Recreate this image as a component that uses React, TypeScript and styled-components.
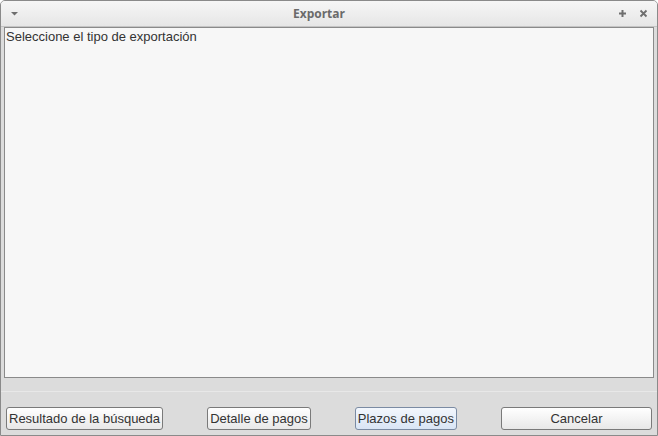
import React from 'react';
import styled, { createGlobalStyle } from 'styled-components';

const GlobalStyle = createGlobalStyle`
  html, body {
    margin: 0;
    padding: 0;
    background: #ffffff;
  }
  * {
    box-sizing: border-box;
  }
`

const Window = styled.div`
  width: 658px;
  height: 436px;
  display: flex;
  flex-direction: column;
  border: 1px solid #8a8a8a;
  border-radius: 5px 5px 0 0;
  background: #dcdcdc;
  overflow: hidden;
`

const TitleBar = styled.div`
  height: 26px;
  flex: none;
  display: flex;
  align-items: center;
  background: linear-gradient(#f6f6f6, #e6e6e6);
  border-bottom: 1px solid #c4c4c4;
`

const TitleSide = styled.div<{ width: number }>`
  width: ${(p) => p.width}px;
  height: 100%;
  display: flex;
  align-items: center;
  justify-content: flex-end;
  gap: 12px;
  padding: 0 9px;
  &:first-child {
    justify-content: flex-start;
  }
`

const Title = styled.div`
  flex: 1;
  text-align: center;
  font-family: "Open Sans", "DejaVu Sans", sans-serif;
  font-weight: bold;
  font-size: 12px;
  color: #6a6a6a;
`

const Body = styled.div`
  flex: 1;
  display: flex;
  flex-direction: column;
  padding: 0 3px;
`

const Panel = styled.div`
  flex: 1;
  background: #f7f7f7;
  border: 1px solid #8a8a8a;
  padding: 0 1px;
  font-family: "Liberation Sans", Arial, sans-serif;
  font-size: 13px;
  line-height: 17px;
  color: #333333;
`

const Footer = styled.div`
  height: 57px;
  flex: none;
  display: flex;
  flex-direction: column;
`

const Separator = styled.div`
  margin-top: 13px;
  height: 1px;
  background: #c2c2c2;
  border-bottom: 1px solid #e8e8e8;
  margin-left: -3px;
  margin-right: -3px;
`

const ButtonRow = styled.div`
  margin-top: 15px;
  display: flex;
  justify-content: space-between;
  padding: 0 2px;
`

const Button = styled.button<{ focused?: boolean; width?: number }>`
  height: 23px;
  padding: 0 2px;
  ${(p) => (p.width ? `width: ${p.width}px;` : '')}
  border: 1px solid ${(p) => (p.focused ? '#7b8ba3' : '#7a7a7a')};
  border-radius: 3px;
  background: ${(p) =>
    p.focused
      ? 'linear-gradient(#f3f7fd, #d9e5f5)'
      : 'linear-gradient(#ffffff, #e8e8e8)'};
  font-family: "Liberation Sans", Arial, sans-serif;
  font-size: 13px;
  color: #333333;
  line-height: 21px;
  white-space: nowrap;
`

const Icon = ({ children }: { children: React.ReactNode }) => (
  <svg width="9" height="9" viewBox="0 0 9 9">
    {children}
  </svg>
)

export default function App() {
  return (
    <>
      <GlobalStyle />
      <Window>
        <TitleBar>
          <TitleSide width={28}>
            <Icon>
              <path d="M1 3 L8 3 L4.5 6.5 Z" fill="#6e6e6e" />
            </Icon>
          </TitleSide>
          <Title>Exportar</Title>
          <TitleSide width={48}>
            <Icon>
              <path d="M4.5 1 V8 M1 4.5 H8" stroke="#6e6e6e" strokeWidth="2" />
            </Icon>
            <Icon>
              <path d="M1.5 1.5 L7.5 7.5 M7.5 1.5 L1.5 7.5" stroke="#6e6e6e" strokeWidth="1.8" />
            </Icon>
          </TitleSide>
        </TitleBar>
        <Body>
          <Panel>Seleccione el tipo de exportación</Panel>
          <Footer>
            <Separator />
            <ButtonRow>
              <Button>Resultado de la búsqueda</Button>
              <Button>Detalle de pagos</Button>
              <Button focused>Plazos de pagos</Button>
              <Button width={151}>Cancelar</Button>
            </ButtonRow>
          </Footer>
        </Body>
      </Window>
    </>
  )
}
